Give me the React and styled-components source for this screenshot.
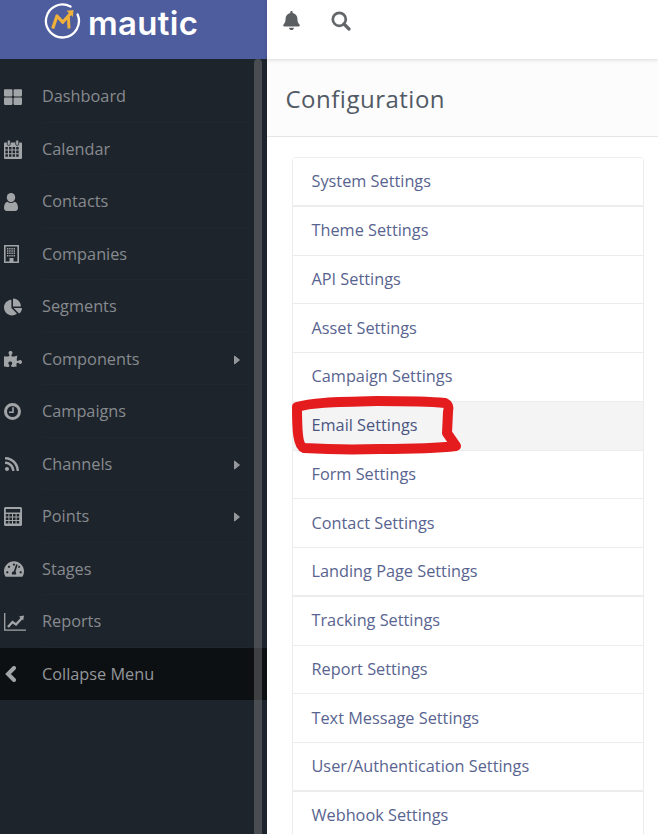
import React from "react";
import styled, { createGlobalStyle } from "styled-components";
import { FaThLarge, FaChartPie, FaPuzzlePiece, FaRss, FaTachometerAlt, FaBell } from "react-icons/fa";

const Global = createGlobalStyle`
  html, body { margin: 0; padding: 0; height: 100%; overflow: hidden; background: #fff; }
  * { box-sizing: border-box; }
`;

const Page = styled.div`
  display: grid;
  grid-template-columns: 267px 1fr;
  width: 658px;
  height: 834px;
  overflow: hidden;
  position: relative;
  font-family: "Open Sans", sans-serif;
`;

const Sidebar = styled.aside`
  display: flex;
  flex-direction: column;
  background: #1e242b;
  position: relative;
  height: 834px;
`;

const Brand = styled.div`
  height: 59px;
  flex: none;
  background: #4e5d9d;
  display: flex;
  align-items: flex-start;
  padding: 3px 0 0 44px;
  gap: 6px;
`;

const BrandName = styled.span`
  font-family: "Inter", sans-serif;
  font-weight: 600;
  font-size: 33px;
  line-height: 36px;
  color: #fff;
  letter-spacing: 0.3px;
  margin-top: 2px;
`;

const Nav = styled.nav`
  display: flex;
  flex-direction: column;
  padding-top: 11.25px;
`;

const NavRow = styled.div`
  height: 52.5px;
  display: flex;
  align-items: center;
  padding: 0 0 0.6px 42px;
  position: relative;
  color: ${p => (p.$dark ? "#93969a" : "#878b90")};
  background: ${p => (p.$dark ? "#0d1013" : "transparent")};
  font-size: 16.3px;
  &::after {
    content: "";
    position: absolute;
    left: 42px;
    right: 17px;
    bottom: 0;
    height: 1px;
    background: ${p => (p.$dark ? "transparent" : "#21272f")};
  }
`;

const NavIcon = styled.span`
  position: absolute;
  left: 4px;
  top: 0;
  bottom: 0;
  display: flex;
  align-items: center;
  color: #a2a5a8;
  font-size: 17px;
`;

const Caret = styled.svg`
  position: absolute;
  left: 234px;
  top: 22px;
  color: #94979b;
`;

const Scrollbar = styled.div`
  position: absolute;
  left: 254px;
  top: 59px;
  bottom: 0;
  width: 8px;
  background: rgba(150, 150, 150, 0.36);
  border-radius: 4px 4px 0 0;
`;

const Main = styled.main`
  display: flex;
  flex-direction: column;
  min-width: 0;
  background: #fff;
`;

const Topbar = styled.header`
  height: 59px;
  flex: none;
  background: #fff;
  display: flex;
  align-items: flex-start;
  gap: 30px;
  padding: 11px 0 0 15px;
  color: #5b5f62;
  font-size: 19px;
  box-shadow: 0 1px 4px rgba(0, 0, 0, 0.14);
  position: relative;
`;

const TitleBar = styled.div`
  height: 78px;
  flex: none;
  background: #fcfcfc;
  border-bottom: 1px solid #e6e6e6;
  padding: 2px 0 0 18.5px;
  display: flex;
  align-items: center;
`;

const Title = styled.h1`
  margin: 0;
  font-size: 24px;
  font-weight: 400;
  color: #525a65;
  letter-spacing: 0.5px;
`;

const Content = styled.div`
  padding: 20px 14px 0 25px;
`;

const List = styled.div`
  border: 1px solid #ececec;
  border-bottom: 0;
  border-radius: 4px 4px 0 0;
  background: #fff;
`;

const Item = styled.div`
  height: 48.75px;
  padding: 0 0 1.2px 18.5px;
  display: flex;
  align-items: center;
  font-size: 16.3px;
  color: ${p => (p.$active ? "#4a5580" : "#58648f")};
  background: ${p => (p.$active ? "#f4f4f5" : "#fff")};
  border-bottom: ${p => (p.$thick ? 2 : 1)}px solid #ececec;
`;

const Annotation = styled.svg`
  position: absolute;
  left: 0;
  top: 0;
  pointer-events: none;
`;

const holes = (x0, y0, cols, rows, w, h, gx, gy) => {
  let d = "";
  for (let r = 0; r < rows; r++)
    for (let c = 0; c < cols; c++)
      d += `M${x0 + c * (w + gx)} ${y0 + r * (h + gy)}h${w}v${h}h${-w}z`;
  return d;
};

const Logo = () => (
  <svg width="38" height="38" viewBox="0 0 38 38" style={{ flex: "none" }}>
    <path d="M26.5 3.6A16.5 16.5 0 1 0 33.6 11.5" fill="none" stroke="#fff" strokeWidth="2.3" strokeLinecap="round" />
    <path d="M8.7 25.5L13 13l5.7 6.2L27 10" fill="none" stroke="#f0b13a" strokeWidth="3.2" strokeLinejoin="round" />
    <path d="M22.5 7.8l7-.8-.6 7z" fill="#f0b13a" />
    <path d="M24.4 14l.6 11.5" fill="none" stroke="#f0b13a" strokeWidth="3" />
  </svg>
);

const CalendarIcon = () => (
  <svg width="18" height="19" viewBox="0 0 18 19" fill="currentColor">
    <path fillRule="evenodd" d={"M1 2.5h16a1 1 0 0 1 1 1V18a1 1 0 0 1-1 1H1a1 1 0 0 1-1-1V3.5a1 1 0 0 1 1-1z" + holes(1.4, 7, 4, 3, 2.5, 2.6, 1.1, 1)} />
    <rect x="3.3" y="0" width="3" height="5.4" rx="1.2" stroke="#1e242b" strokeWidth=".8" />
    <rect x="11.7" y="0" width="3" height="5.4" rx="1.2" stroke="#1e242b" strokeWidth=".8" />
  </svg>
);

const UserIcon = () => (
  <svg width="14" height="18" viewBox="0 0 14 18" fill="currentColor">
    <ellipse cx="7" cy="4.6" rx="4.2" ry="4.6" />
    <path d="M0 15c0-3.8 1.6-6 3.5-6.3C4.5 9.5 5.7 10 7 10s2.5-.5 3.5-1.3C12.4 9 14 11.2 14 15c0 2-1.3 3-3 3H3c-1.7 0-3-1-3-3z" />
  </svg>
);

const BuildingIcon = () => (
  <svg width="15" height="18" viewBox="0 0 15 18" fill="currentColor">
    <path fillRule="evenodd" d="M0 0h15v18H0zM1.6 1.5v15h11.8v-15z" />
    <path d={holes(3, 3, 4, 4, 1.4, 1.5, .8, .8) + "M5.5 13h4v4h-4z"} />
  </svg>
);

const ClockIcon = () => (
  <svg width="17" height="17" viewBox="0 0 17 17" fill="none" stroke="currentColor">
    <circle cx="8.5" cy="8.5" r="7" strokeWidth="3" />
    <path d="M9 4.3v5H5" strokeWidth="1.6" />
  </svg>
);

const CalculatorIcon = () => (
  <svg width="18" height="19" viewBox="0 0 18 19" fill="currentColor">
    <path fillRule="evenodd" d={"M1.5 0h15A1.5 1.5 0 0 1 18 1.5v16a1.5 1.5 0 0 1-1.5 1.5h-15A1.5 1.5 0 0 1 0 17.5v-16A1.5 1.5 0 0 1 1.5 0zM1.8 2v3.4h14.4V2z" + holes(1.8, 7, 4, 3, 2.6, 2.5, 1, 1)} />
  </svg>
);

const ChartIcon = () => (
  <svg width="22" height="18" viewBox="0 0 22 18" fill="none" stroke="currentColor">
    <path d="M.7 0v17.2H22" strokeWidth="1.3" />
    <path d="M4 14l4.5-5 3.5 2.500 6-6.500" strokeWidth="2.4" />
    <path d="M15 3.5l5-1-.8 5z" fill="currentColor" stroke="none" />
  </svg>
);

const ChevronIcon = () => (
  <svg width="12" height="16" viewBox="0 0 12 16" fill="none" stroke="currentColor">
    <path d="M10 2L4 8l6 6" strokeWidth="4" strokeLinecap="round" />
  </svg>
);

const SearchIcon = () => (
  <svg width="20" height="20" viewBox="0 0 20 20" fill="none" stroke="#63676a">
    <circle cx="8.3" cy="8.3" r="6.5" strokeWidth="2.7" />
    <path d="M13 13l5 5" strokeWidth="3.2" strokeLinecap="round" />
  </svg>
);

const Thumbnail = () => <FaThLarge size={18} />;
const Pie = () => <FaChartPie size={18} />;
const Puzzle = () => <FaPuzzlePiece size={18} />;
const Rss = () => <FaRss size={16} />;
const Gauge = () => <FaTachometerAlt size={20} />;

const items = [
  ["Dashboard", Thumbnail], ["Calendar", CalendarIcon], ["Contacts", UserIcon], ["Companies", BuildingIcon],
  ["Segments", Pie], ["Components", Puzzle, true], ["Campaigns", ClockIcon], ["Channels", Rss, true],
  ["Points", CalculatorIcon, true], ["Stages", Gauge], ["Reports", ChartIcon],
];

const settings = [
  ["System Settings", true], ["Theme Settings"], ["API Settings"], ["Asset Settings"], ["Campaign Settings"],
  ["Email Settings", false, true], ["Form Settings"], ["Contact Settings"], ["Landing Page Settings", true],
  ["Tracking Settings"], ["Report Settings"], ["Text Message Settings"], ["User/Authentication Settings", true],
  ["Webhook Settings"],
];

export default function App() {
  return (
    <>
      <Global />
      <Page>
        <Sidebar>
          <Brand>
            <Logo />
            <BrandName>mautic</BrandName>
          </Brand>
          <Nav>
            {items.map(([label, Icon, sub]) => (
              <NavRow key={label}>
                <NavIcon><Icon /></NavIcon>
                {label}
                {sub && (
                  <Caret width="6" height="10" viewBox="0 0 6 10">
                    <path d="M.5 1L5.5 5 .5 9z" fill="currentColor" stroke="currentColor" strokeLinejoin="round" />
                  </Caret>
                )}
              </NavRow>
            ))}
            <NavRow $dark>
              <NavIcon><ChevronIcon /></NavIcon>
              Collapse Menu
            </NavRow>
          </Nav>
          <Scrollbar />
        </Sidebar>
        <Main>
          <Topbar>
            <FaBell />
            <SearchIcon />
          </Topbar>
          <TitleBar><Title>Configuration</Title></TitleBar>
          <Content>
            <List>
              {settings.map(([label, thick, active]) => (
                <Item key={label} $thick={thick} $active={active}>{label}</Item>
              ))}
            </List>
          </Content>
        </Main>
        <Annotation width="658" height="834" viewBox="0 0 658 834">
          <path
            d="M297 407C310 403 330 402 377 401C410 401 435 402 445 403C449 405 449 408 448 412L447 433L456 446C440 448 410 449 380 449C350 450 320 449 304 448C298 446 297 430 297 407Z"
            fill="none" stroke="#e41c1e" strokeWidth="10" strokeLinejoin="round"
          />
        </Annotation>
      </Page>
    </>
  );
}
